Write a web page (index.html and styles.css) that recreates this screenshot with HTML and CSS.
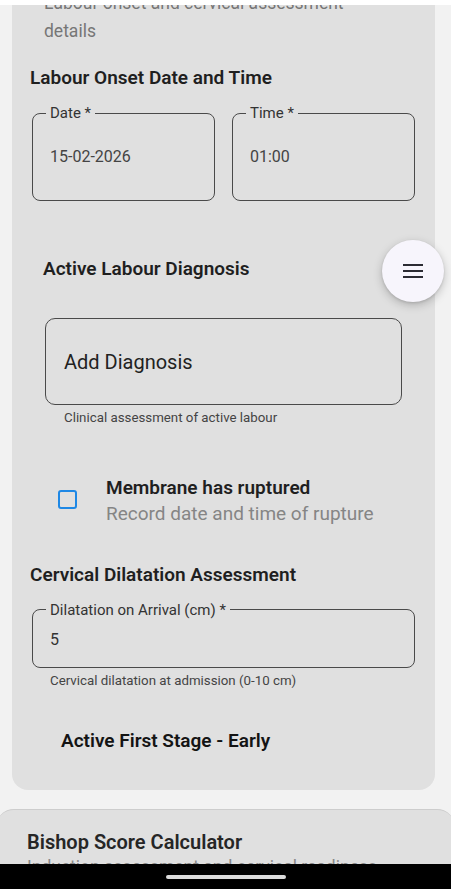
FILE: index.html
```html
<!DOCTYPE html>
<html lang="en">
<head>
<meta charset="utf-8">
<title>Labour Assessment</title>
<link rel="stylesheet" href="styles.css">
</head>
<body>
<div class="topbar"></div>
<main class="page">
  <section class="card">
    <p class="card-sub">Labour onset and cervical assessment details</p>
    <h2 class="heading">Labour Onset Date and Time</h2>
    <div class="field-row">
      <fieldset class="field field-tall">
        <legend>Date *</legend>
        <div class="field-value">15-02-2026</div>
      </fieldset>
      <fieldset class="field field-tall">
        <legend>Time *</legend>
        <div class="field-value">01:00</div>
      </fieldset>
    </div>

    <h3 class="heading heading-indent">Active Labour Diagnosis</h3>
    <div class="diag-box">Add Diagnosis</div>
    <p class="helper helper-diag">Clinical assessment of active labour</p>

    <div class="check-row">
      <span class="checkbox"></span>
      <div class="check-text">
        <div class="check-title">Membrane has ruptured</div>
        <div class="check-sub">Record date and time of rupture</div>
      </div>
    </div>

    <h2 class="heading heading-cervical">Cervical Dilatation Assessment</h2>
    <fieldset class="field field-short">
      <legend>Dilatation on Arrival (cm) *</legend>
      <div class="field-value">5</div>
    </fieldset>
    <p class="helper helper-dil">Cervical dilatation at admission (0-10 cm)</p>

    <p class="stage">Active First Stage - Early</p>
  </section>

  <section class="card card-next">
    <h2 class="next-title">Bishop Score Calculator</h2>
    <p class="next-sub">Induction assessment and cervical readiness</p>
  </section>
</main>

<button class="fab" aria-label="Menu">
  <svg width="20" height="14" viewBox="0 0 20 14"><rect x="0" y="0" width="20" height="2" fill="#2b2b33"/><rect x="0" y="6" width="20" height="2" fill="#2b2b33"/><rect x="0" y="12" width="20" height="2" fill="#2b2b33"/></svg>
</button>

<div class="navbar"><span class="pill"></span></div>
</body>
</html>
```

FILE: styles.css
```css
* { box-sizing: border-box; }

html, body {
  margin: 0;
  padding: 0;
}

body {
  background: #f2f2f2;
  font-family: Roboto, "Noto Sans", "Liberation Sans", sans-serif;
  color: #1f1f1f;
  width: 451px;
  height: 889px;
  overflow: hidden;
}

.topbar {
  position: fixed;
  top: 0;
  left: 0;
  right: 0;
  height: 5px;
  background: #ffffff;
  z-index: 5;
}

.page {
  padding: 0 16px 0 12px;
}

.card {
  background: #e0e0e0;
  border-radius: 16px;
  margin-top: -11px;
  padding: 0 0 37px 0;
  display: flex;
  flex-direction: column;
  align-items: flex-start;
}

.card-sub {
  align-self: stretch;
  margin: 0 40px 0 32px;
  font-size: 17.5px;
  line-height: 28px;
  color: #767676;
}

.heading {
  margin: 21px 0 0 18px;
  font-size: 19px;
  line-height: 24px;
  font-weight: 600;
  color: #1f1f1f;
}

.heading-indent {
  margin: 55.5px 0 0 31px;
}

.heading-cervical {
  margin-top: 35.5px;
}

.field-row {
  align-self: stretch;
  display: grid;
  grid-template-columns: 1fr 1fr;
  gap: 17px;
  margin: 15px 20px 0 20px;
}

.field {
  margin: 0;
  min-width: 0;
  border: 1px solid #4a4a4a;
  border-radius: 8px;
  padding: 0 17px;
}

.field legend {
  margin-left: -4px;
  padding: 0 4px;
  font-size: 15px;
  line-height: 16px;
  color: #333333;
}

.field-value {
  font-size: 16px;
  line-height: 20px;
  color: #444444;
}

.field-tall .field-value {
  padding: 26px 0 33px 0;
}

.field-short {
  align-self: stretch;
  margin: 15px 20px 0 20px;
}

.field-short .field-value {
  padding: 12px 0 17px 0;
  color: #333333;
}

.diag-box {
  align-self: stretch;
  margin: 37.5px 33px 0 33px;
  height: 87px;
  border: 1px solid #4a4a4a;
  border-radius: 10px;
  padding-left: 18px;
  display: flex;
  align-items: center;
  font-size: 20px;
  color: #222222;
}

.helper {
  margin: 0;
  font-size: 13.3px;
  line-height: 16px;
  color: #444444;
}

.helper-diag {
  margin: 4.5px 0 0 52px;
}

.helper-dil {
  margin: 5px 0 0 38px;
}

.check-row {
  display: flex;
  align-items: flex-start;
  margin: 49.5px 0 0 46px;
}

.checkbox {
  width: 19px;
  height: 19px;
  margin-top: 15px;
  border: 2px solid #1e88e5;
  border-radius: 3px;
  flex-shrink: 0;
}

.check-text {
  margin-left: 29px;
  font-size: 19px;
  line-height: 26px;
}

.check-title {
  font-weight: 600;
  color: #1f1f1f;
}

.check-sub {
  color: #858585;
}

.stage {
  margin: 40.3px 0 0 49px;
  font-size: 19px;
  line-height: 24px;
  font-weight: 600;
  color: #141414;
}

.card-next {
  margin: 19px -20px 0 -16px;
  border-top: 1px solid #cdcdcd;
  padding: 19.5px 0 0 31px;
  height: 120px;
  border-radius: 18px 18px 0 0;
}

.next-title {
  margin: 0;
  font-size: 20px;
  line-height: 26px;
  font-weight: 600;
  color: #262626;
}

.next-sub {
  margin: 0;
  font-size: 17.5px;
  line-height: 24px;
  color: #888888;
}

.fab {
  position: fixed;
  left: 382px;
  top: 240px;
  width: 62px;
  height: 62px;
  border-radius: 50%;
  border: none;
  background: #f7f5fc;
  box-shadow: 0 3px 10px rgba(0, 0, 0, 0.22), 0 1px 3px rgba(0, 0, 0, 0.12);
  display: flex;
  align-items: center;
  justify-content: center;
  padding: 0;
  z-index: 4;
}

.navbar {
  position: fixed;
  left: 0;
  right: 0;
  bottom: 0;
  height: 25px;
  background: #000000;
  display: flex;
  justify-content: center;
  z-index: 6;
}

.pill {
  margin-top: 11px;
  width: 120px;
  height: 4px;
  border-radius: 2px;
  background: #dcdcdc;
}
```
